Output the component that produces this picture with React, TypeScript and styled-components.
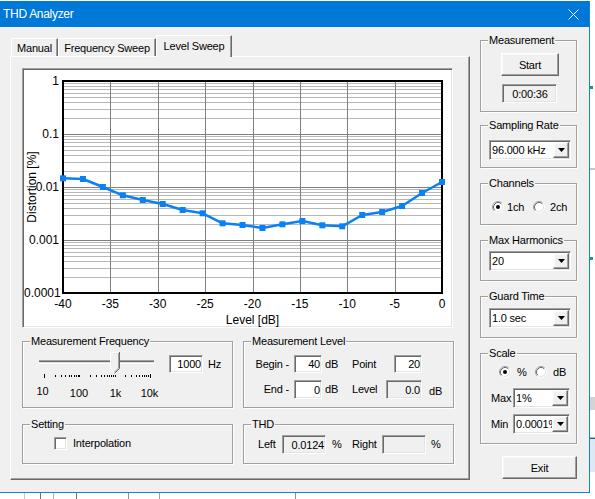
import React from "react";
import styled, { createGlobalStyle, css } from "styled-components";

const UI_FONT = `"Liberation Sans", Arial, Helvetica, sans-serif`;

const GlobalStyle = createGlobalStyle`
  html, body { margin: 0; padding: 0; background: #ffffff; }
  body { font-family: ${UI_FONT}; }
  *, *::before, *::after { box-sizing: border-box; }
`;

const sunken = css`
  border: 1px solid;
  border-color: #a0a0a0 #ffffff #ffffff #a0a0a0;
  box-shadow: inset 1px 1px 0 #696969, inset -1px -1px 0 #e3e3e3;
`;

const raised = css`
  border: 1px solid;
  border-color: #ffffff #696969 #696969 #ffffff;
  box-shadow: inset -1px -1px 0 #a0a0a0, inset 1px 1px 0 #f8f8f8;
`;

const Page = styled.div`
  width: 595px;
  height: 499px;
  overflow: hidden;
  background: #ffffff;
  display: grid;
  grid-template-columns: 590px 5px;
  grid-template-rows: 493px 6px;
  font-family: ${UI_FONT};
  font-size: 11px;
  letter-spacing: -0.2px;
  color: #000;
`;

const Window = styled.div`
  grid-column: 1;
  grid-row: 1;
  margin-top: 1px;
  display: flex;
  flex-direction: column;
  background: #f0f0f0;
  border-right: 1px solid #1a7fd4;
  border-bottom: 1px solid #1a7fd4;
`;

const TitleBar = styled.div`
  height: 26px;
  flex-shrink: 0;
  background: #0078d7;
  color: #ffffff;
  display: flex;
  align-items: center;
  justify-content: space-between;
  padding: 0 10px 0 3px;
  font-size: 12px;
  letter-spacing: -0.3px;
`;

const CloseSvg = styled.svg`
  display: block;
`;

const Client = styled.div`
  flex: 1;
  display: flex;
  align-items: flex-start;
  gap: 10px;
  padding: 8px 0 0 10px;
`;

const TabControl = styled.div`
  width: 460px;
  display: flex;
  flex-direction: column;
`;

const TabsRow = styled.div`
  height: 21px;
  display: flex;
  align-items: flex-end;
  padding-left: 1px;
  position: relative;
  z-index: 1;
`;

const Tab = styled.div<{ $w: number; $active?: boolean }>`
  width: ${(p) => p.$w}px;
  height: ${(p) => (p.$active ? 22 : 18)}px;
  margin-bottom: ${(p) => (p.$active ? -1 : 0)}px;
  padding-bottom: ${(p) => (p.$active ? 2 : 0)}px;
  background: #f0f0f0;
  border-top: 1px solid #ffffff;
  border-left: 1px solid #ffffff;
  border-right: 1px solid #696969;
  box-shadow: inset -1px 0 0 #a0a0a0;
  display: flex;
  align-items: center;
  justify-content: center;
  white-space: nowrap;
`;

const Panel = styled.div`
  height: 424px;
  border: 1px solid;
  border-color: #ffffff #696969 #696969 #ffffff;
  box-shadow: inset -1px -1px 0 #a0a0a0;
  padding: 11px 0 0 11px;
`;

const ChartFrame = styled.div`
  width: 431px;
  height: 260px;
  ${sunken};
  background: #ffffff;
  padding: 1px;
`;

const ChartSvg = styled.svg`
  display: block;
  overflow: visible;
  font-family: ${UI_FONT};
  letter-spacing: 0;
`;

const GroupsGrid = styled.div`
  margin-top: 13px;
  display: grid;
  grid-template-columns: 211px 211px;
  grid-template-rows: 67px 40px;
  column-gap: 10px;
  row-gap: 16px;
`;

const Group = styled.div<{ $h?: number; $mt?: number }>`
  position: relative;
  border: 1px solid #a0a0a0;
  box-shadow: 1px 1px 0 #ffffff, inset 1px 1px 0 #ffffff;
  ${(p) => (p.$h !== undefined ? `height: ${p.$h}px;` : "")}
  margin-top: ${(p) => p.$mt ?? 0}px;
  flex-shrink: 0;
`;

const Legend = styled.span`
  position: absolute;
  top: -7px;
  left: 7px;
  padding: 0 1px;
  background: #f0f0f0;
  line-height: 13px;
  white-space: nowrap;
`;

const Stack = styled.div<{ $pt?: number; $pl?: number; $gap?: number }>`
  display: flex;
  flex-direction: column;
  align-items: flex-start;
  padding-top: ${(p) => p.$pt ?? 0}px;
  padding-left: ${(p) => p.$pl ?? 0}px;
  gap: ${(p) => p.$gap ?? 0}px;
`;

const Row = styled.div<{ $pt?: number; $h?: number; $align?: string }>`
  display: flex;
  align-items: ${(p) => p.$align ?? "center"};
  padding-top: ${(p) => p.$pt ?? 0}px;
  ${(p) => (p.$h !== undefined ? `height: ${p.$h}px;` : "")}
`;

const Cell = styled.div<{ $w?: number; $right?: boolean; $pl?: number; $pr?: number; $mt?: number }>`
  ${(p) => (p.$w !== undefined ? `width: ${p.$w}px;` : "")}
  flex-shrink: 0;
  text-align: ${(p) => (p.$right ? "right" : "left")};
  padding-left: ${(p) => p.$pl ?? 0}px;
  padding-right: ${(p) => p.$pr ?? 0}px;
  margin-top: ${(p) => p.$mt ?? 0}px;
  white-space: nowrap;
  line-height: 13px;
`;

const Field = styled.div<{ $w: number; $h?: number; $ro?: boolean; $ml?: number; $mt?: number; $center?: boolean }>`
  ${sunken};
  width: ${(p) => p.$w}px;
  height: ${(p) => p.$h ?? 19}px;
  margin-left: ${(p) => p.$ml ?? 0}px;
  margin-top: ${(p) => p.$mt ?? 0}px;
  background: ${(p) => (p.$ro ? "#f0f0f0" : "#ffffff")};
  display: flex;
  align-items: center;
  justify-content: ${(p) => (p.$center ? "center" : "flex-end")};
  padding: 0 1px 0 2px;
  white-space: nowrap;
  overflow: hidden;
  flex-shrink: 0;
`;

const Button = styled.div<{ $w: number; $h: number; $ml?: number; $mt?: number }>`
  ${raised};
  width: ${(p) => p.$w}px;
  height: ${(p) => p.$h}px;
  margin-left: ${(p) => p.$ml ?? 0}px;
  margin-top: ${(p) => p.$mt ?? 0}px;
  background: #f0f0f0;
  display: flex;
  align-items: center;
  justify-content: center;
  flex-shrink: 0;
`;

const ComboBox = styled.div<{ $w: number; $ml?: number }>`
  ${sunken};
  width: ${(p) => p.$w}px;
  height: 20px;
  margin-left: ${(p) => p.$ml ?? 0}px;
  background: #ffffff;
  display: flex;
  padding: 1px;
  flex-shrink: 0;
`;

const ComboText = styled.div`
  flex: 1;
  min-width: 0;
  display: flex;
  align-items: center;
  padding-left: 1px;
  overflow: hidden;
  white-space: nowrap;
`;

const ComboButton = styled.div`
  ${raised};
  width: 16px;
  flex-shrink: 0;
  background: #f0f0f0;
  display: flex;
  align-items: center;
  justify-content: center;
`;

const CheckBox = styled.div<{ $ml?: number }>`
  ${sunken};
  width: 13px;
  height: 13px;
  background: #ffffff;
  margin-left: ${(p) => p.$ml ?? 0}px;
  flex-shrink: 0;
`;

const RadioSvg = styled.svg<{ $ml?: number }>`
  display: block;
  flex-shrink: 0;
  margin-left: ${(p) => p.$ml ?? 0}px;
`;

const SliderSvg = styled.svg`
  display: block;
  flex-shrink: 0;
  margin: 8px 0 0 7px;
  font-family: ${UI_FONT};
  letter-spacing: 0;
`;

const RightColumn = styled.div`
  width: 97px;
  margin-top: 5px;
  display: flex;
  flex-direction: column;
`;

const RightStrip = styled.div`
  grid-column: 2;
  grid-row: 1 / span 2;
  background: #ffffff;
  display: flex;
  flex-direction: column;
`;

const Mark = styled.div<{ $mt?: number; $h: number; $w?: number; $c: string }>`
  margin-top: ${(p) => p.$mt ?? 0}px;
  height: ${(p) => p.$h}px;
  width: ${(p) => (p.$w ? `${p.$w}px` : "100%")};
  background: ${(p) => p.$c};
  flex-shrink: 0;
`;

const BottomStrip = styled.div`
  grid-column: 1;
  grid-row: 2;
  background: #ffffff;
  display: flex;
`;

const Seg = styled.div<{ $w: number; $c: string }>`
  width: ${(p) => p.$w}px;
  height: 100%;
  border-right: 1px solid ${(p) => p.$c};
  flex-shrink: 0;
`;

/* ---------- drawings ---------- */

const DownArrow = () => (
  <svg width="7" height="4" viewBox="0 0 7 4" style={{ display: "block" }}>
    <polygon points="0,0 7,0 3.5,4" fill="#000" />
  </svg>
);

const Combo = ({ w, ml, children }: { w: number; ml?: number; children: React.ReactNode }) => (
  <ComboBox $w={w} $ml={ml}>
    <ComboText>{children}</ComboText>
    <ComboButton>
      <DownArrow />
    </ComboButton>
  </ComboBox>
);

const Radio = ({ checked, ml }: { checked?: boolean; ml?: number }) => (
  <RadioSvg width="12" height="12" viewBox="0 0 12 12" $ml={ml}>
    <circle cx="6" cy="6" r="5" fill="#ffffff" />
    <path d="M2.11 9.89 A5.5 5.5 0 0 1 9.89 2.11" stroke="#a0a0a0" fill="none" />
    <path d="M9.89 2.11 A5.5 5.5 0 0 1 2.11 9.89" stroke="#ffffff" fill="none" />
    <path d="M2.82 9.18 A4.5 4.5 0 0 1 9.18 2.82" stroke="#696969" fill="none" />
    <path d="M9.18 2.82 A4.5 4.5 0 0 1 2.82 9.18" stroke="#e3e3e3" fill="none" />
    {checked && <circle cx="6" cy="6" r="2" fill="#000" />}
  </RadioSvg>
);

const PL = 39;
const PT = 11;
const PW = 379;
const PH = 212;
const DEC = 53;
const yPage = [178.3, 179, 187, 195.3, 200, 204, 210, 213.3, 223.3, 225, 228, 224.3, 221, 225.3, 226.3, 215, 212, 206, 193, 182];
const points = yPage.map((y, i) => [PL + (i * PW) / 19, y - 70]);

const Chart = () => {
  const minor: number[] = [];
  for (let d = 0; d < 4; d++) {
    for (let m = 2; m <= 9; m++) {
      minor.push(Math.round(PT + (d + 1) * DEC - Math.log10(m) * DEC) + 0.5);
    }
  }
  const majorY = [1, 2, 3].map((d) => PT + d * DEC + 0.5);
  const vx = [1, 2, 3, 4, 5, 6, 7].map((k) => Math.round(PL + (k * PW) / 8) + 0.5);
  const xLabels = ["-40", "-35", "-30", "-25", "-20", "-15", "-10", "-5", "0"];
  const yLabels = ["1", "0.1", "0.01", "0.001"];
  return (
    <ChartSvg width="427" height="256" viewBox="0 0 427 256">
      <g shapeRendering="crispEdges">
        {minor.map((y, i) => (
          <line key={`m${i}`} x1={PL} x2={PL + PW} y1={y} y2={y} stroke="#b8b8b8" strokeWidth="1" />
        ))}
        {majorY.map((y, i) => (
          <line key={`M${i}`} x1={PL} x2={PL + PW} y1={y} y2={y} stroke="#808080" strokeWidth="1" />
        ))}
        {vx.map((x, i) => (
          <line key={`v${i}`} x1={x} x2={x} y1={PT} y2={PT + PH} stroke="#808080" strokeWidth="1" />
        ))}
        <rect x={PL} y={PT} width={PW} height={PH} fill="none" stroke="#000" strokeWidth="2" />
      </g>
      <polyline
        points={points.map((p) => p.join(",")).join(" ")}
        fill="none"
        stroke="#0a80f5"
        strokeWidth="2.5"
        strokeLinejoin="round"
      />
      {points.map(([x, y], i) => (
        <rect key={`p${i}`} x={x - 3} y={y - 3} width="6" height="6" fill="#0a80f5" />
      ))}
      {yLabels.map((t, i) => (
        <text key={t} x={35} y={PT + i * DEC + 4.3} fontSize="12" textAnchor="end" fill="#000">
          {t}
        </text>
      ))}
      <text x={0} y={PT + 4 * DEC + 4.3} fontSize="12" fill="#000">
        0.0001
      </text>
      {xLabels.map((t, i) => (
        <text key={t} x={PL + (i * PW) / 8} y={238} fontSize="12" textAnchor="middle" fill="#000">
          {t}
        </text>
      ))}
      <text x={228.5} y={254} fontSize="12" textAnchor="middle" fill="#000">
        Level [dB]
      </text>
      <text x={12} y={117} fontSize="12" textAnchor="middle" fill="#000" transform="rotate(-90 12 117)">
        Distortion [%]
      </text>
    </ChartSvg>
  );
};

const Slider = () => {
  const freqs: number[] = [];
  [10, 100, 1000].forEach((base) => {
    for (let m = 1; m <= 9; m++) freqs.push(base * m);
  });
  freqs.push(10000);
  const tx = (f: number) => Math.round(14 + 35.3 * Math.log10(f / 10));
  return (
    <SliderSvg width="136" height="50" viewBox="0 0 136 50">
      <g shapeRendering="crispEdges">
        <rect x="9" y="10" width="115" height="1" fill="#a0a0a0" />
        <rect x="9" y="11" width="115" height="1" fill="#696969" />
        <rect x="9" y="12" width="115" height="1" fill="#e3e3e3" />
        <rect x="9" y="13" width="115" height="1" fill="#ffffff" />
        {freqs.map((f, i) => {
          const big = f === 10 || f === 10000;
          return <rect key={i} x={tx(f)} y={big ? 24 : 25} width="1" height={big ? 4 : 2} fill="#000" />;
        })}
      </g>
      <path d="M80 2 H89.5 V18.5 L84.75 23 L80 18.5 Z" fill="#f0f0f0" />
      <path d="M80.5 18.5 V2.5 H89" stroke="#ffffff" fill="none" />
      <path d="M89.5 2 V18.5 L84.5 23.5" stroke="#696969" fill="none" />
      <path d="M88.5 3 V18 L84.5 22" stroke="#a0a0a0" fill="none" />
      <path d="M80.5 18.5 L84.5 22.5" stroke="#ffffff" fill="none" />
      <text x="12.5" y="45" fontSize="11" textAnchor="middle" fill="#000">10</text>
      <text x="49" y="46.5" fontSize="11" textAnchor="middle" fill="#000">100</text>
      <text x="85.5" y="46.5" fontSize="11" textAnchor="middle" fill="#000">1k</text>
      <text x="119.5" y="46.5" fontSize="11" textAnchor="middle" fill="#000">10k</text>
    </SliderSvg>
  );
};

export default function App() {
  return (
    <>
      <GlobalStyle />
      <Page>
        <Window>
          <TitleBar>
            <span>THD Analyzer</span>
            <CloseSvg width="11" height="11" viewBox="0 0 11 11">
              <path d="M0.5 0.5 L10.5 10.5 M10.5 0.5 L0.5 10.5" stroke="#ffffff" strokeWidth="1" />
            </CloseSvg>
          </TitleBar>
          <Client>
            <TabControl>
              <TabsRow>
                <Tab $w={47}>Manual</Tab>
                <Tab $w={98}>Frequency Sweep</Tab>
                <Tab $w={76} $active>
                  Level Sweep
                </Tab>
              </TabsRow>
              <Panel>
                <ChartFrame>
                  <Chart />
                </ChartFrame>
                <GroupsGrid>
                  <Group>
                    <Legend>Measurement Frequency</Legend>
                    <Row $align="flex-start">
                      <Slider />
                      <Field $w={34} $h={18} $ml={3} $mt={13}>
                        1000
                      </Field>
                      <Cell $pl={5} $mt={16}>
                        Hz
                      </Cell>
                    </Row>
                  </Group>
                  <Group>
                    <Legend>Measurement Level</Legend>
                    <Stack $pt={13} $gap={7}>
                      <Row>
                        <Cell $w={48} $right $pr={3}>
                          Begin -
                        </Cell>
                        <Field $w={28} $h={18} $ml={2}>
                          40
                        </Field>
                        <Cell $w={30} $pl={3}>
                          dB
                        </Cell>
                        <Cell $w={42}>Point</Cell>
                        <Field $w={28} $h={18}>
                          20
                        </Field>
                      </Row>
                      <Row>
                        <Cell $w={48} $right $pr={3}>
                          End -
                        </Cell>
                        <Field $w={28} $ml={2}>
                          0
                        </Field>
                        <Cell $w={30} $pl={3}>
                          dB
                        </Cell>
                        <Cell $w={34}>Level</Cell>
                        <Field $w={36} $ro>
                          0.0
                        </Field>
                        <Cell $pl={7} $mt={4}>
                          dB
                        </Cell>
                      </Row>
                    </Stack>
                  </Group>
                  <Group>
                    <Legend>Setting</Legend>
                    <Row $pt={12}>
                      <CheckBox $ml={31} />
                      <Cell $pl={6}>Interpolation</Cell>
                    </Row>
                  </Group>
                  <Group>
                    <Legend>THD</Legend>
                    <Row $pt={10}>
                      <Cell $w={38} $pl={14}>
                        Left
                      </Cell>
                      <Field $w={44} $ro>
                        0.0124
                      </Field>
                      <Cell $w={26} $pl={6}>
                        %
                      </Cell>
                      <Cell $w={30}>Right</Cell>
                      <Field $w={44} $ro />
                      <Cell $pl={5}>%</Cell>
                    </Row>
                  </Group>
                </GroupsGrid>
              </Panel>
            </TabControl>

            <RightColumn>
              <Group $h={72}>
                <Legend>Measurement</Legend>
                <Stack>
                  <Button $w={58} $h={23} $ml={20} $mt={12}>
                    Start
                  </Button>
                  <Field $w={55} $h={19} $ml={21} $mt={8} $ro $center>
                    0:00:36
                  </Field>
                </Stack>
              </Group>
              <Group $h={43} $mt={13}>
                <Legend>Sampling Rate</Legend>
                <Stack $pt={14}>
                  <Combo w={82} ml={8}>
                    96.000 kHz
                  </Combo>
                </Stack>
              </Group>
              <Group $h={42} $mt={15}>
                <Legend>Channels</Legend>
                <Row $pt={15} $h={31}>
                  <Radio checked ml={11} />
                  <Cell $w={29} $pl={3}>
                    1ch
                  </Cell>
                  <Radio />
                  <Cell $pl={5}>2ch</Cell>
                </Row>
              </Group>
              <Group $h={41} $mt={15}>
                <Legend>Max Harmonics</Legend>
                <Stack $pt={10}>
                  <Combo w={82} ml={8}>
                    20
                  </Combo>
                </Stack>
              </Group>
              <Group $h={42} $mt={15}>
                <Legend>Guard Time</Legend>
                <Stack $pt={11}>
                  <Combo w={82} ml={8}>
                    1.0 sec
                  </Combo>
                </Stack>
              </Group>
              <Group $h={91} $mt={15}>
                <Legend>Scale</Legend>
                <Stack $pt={10}>
                  <Row $h={16}>
                    <Radio checked ml={18} />
                    <Cell $w={24} $pl={6}>
                      %
                    </Cell>
                    <Radio />
                    <Cell $pl={6}>dB</Cell>
                  </Row>
                  <Row $pt={8}>
                    <Cell $w={32} $pl={10}>
                      Max
                    </Cell>
                    <Combo w={57}>1%</Combo>
                  </Row>
                  <Row $pt={6}>
                    <Cell $w={32} $pl={10}>
                      Min
                    </Cell>
                    <Combo w={57}>0.0001%</Combo>
                  </Row>
                </Stack>
              </Group>
              <Button $w={75} $h={23} $ml={22} $mt={12}>
                Exit
              </Button>
            </RightColumn>
          </Client>
        </Window>
        <RightStrip>
          <Mark $mt={86} $h={3} $w={3} $c="#13a35a" />
          <Mark $mt={79} $h={2} $c="#c8c8c8" />
          <Mark $mt={87} $h={3} $w={3} $c="#13a35a" />
          <Mark $mt={137} $h={13} $c="#d4d4d4" />
          <Mark $mt={27} $h={1} $c="#8fdf8f" />
          <Mark $h={1} $c="#2b5797" />
          <Mark $h={33} $c="#dce9f5" />
        </RightStrip>
        <BottomStrip>
          <Seg $w={25} $c="#c8c8c8" />
          <Seg $w={16} $c="#707070" />
          <Seg $w={13} $c="#b0b0b0" />
          <Seg $w={23} $c="#707070" />
          <Seg $w={52} $c="#909090" />
          <Seg $w={31} $c="#a0a0a0" />
          <Seg $w={136} $c="#909090" />
        </BottomStrip>
      </Page>
    </>
  );
}
